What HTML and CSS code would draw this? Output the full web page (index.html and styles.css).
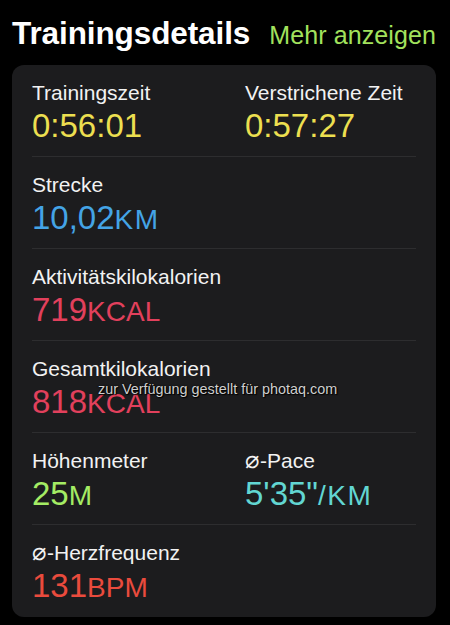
FILE: index.html
```html
<!DOCTYPE html>
<html lang="de">
<head>
<meta charset="utf-8">
<title>Trainingsdetails</title>
<link rel="stylesheet" href="styles.css">
</head>
<body>
<header class="header">
  <h1 class="title">Trainingsdetails</h1>
  <a class="more">Mehr anzeigen</a>
</header>
<section class="card">
  <div class="row two">
    <div class="metric">
      <div class="label">Trainingszeit</div>
      <div class="value yellow">0:56:01</div>
    </div>
    <div class="metric">
      <div class="label">Verstrichene Zeit</div>
      <div class="value yellow">0:57:27</div>
    </div>
  </div>
  <div class="row">
    <div class="metric">
      <div class="label">Strecke</div>
      <div class="value blue">10,02<span class="unit km">km</span></div>
    </div>
  </div>
  <div class="row">
    <div class="metric">
      <div class="label">Aktivitätskilokalorien</div>
      <div class="value pink">719<span class="unit">kcal</span></div>
    </div>
  </div>
  <div class="row">
    <div class="metric">
      <div class="label">Gesamtkilokalorien</div>
      <div class="value pink">818<span class="unit">kcal</span></div>
    </div>
  </div>
  <div class="row two">
    <div class="metric">
      <div class="label">Höhenmeter</div>
      <div class="value green">25<span class="unit">m</span></div>
    </div>
    <div class="metric">
      <div class="label"><span class="diam">⌀</span>-Pace</div>
      <div class="value cyan">5'35"<span class="unit km">/km</span></div>
    </div>
  </div>
  <div class="row">
    <div class="metric">
      <div class="label"><span class="diam">⌀</span>-Herzfrequenz</div>
      <div class="value red">131<span class="unit">bpm</span></div>
    </div>
  </div>
</section>
<div class="watermark">zur Verfügung gestellt für photaq.com</div>
</body>
</html>
```
FILE: styles.css
```css
html, body {
  margin: 0;
  padding: 0;
  background: #000;
}
body {
  width: 450px;
  height: 625px;
  overflow: hidden;
  position: relative;
  font-family: "Liberation Sans", Arial, sans-serif;
  color: #f4f4f4;
}
.header {
  display: flex;
  justify-content: space-between;
  align-items: baseline;
  height: 65px;
  box-sizing: border-box;
  padding: 16px 14px 0 12px;
}
.title {
  margin: 0;
  font-size: 31.5px;
  line-height: 34px;
  font-weight: 700;
  color: #fff;
  letter-spacing: -0.1px;
}
.more {
  font-size: 25px;
  line-height: 34px;
  color: #a2e25d;
  letter-spacing: 0.1px;
}
.card {
  margin: 0 14px 0 12px;
  background: #1c1c1e;
  border-radius: 12px;
  padding: 0 20px;
}
.row {
  display: grid;
  grid-template-columns: 1fr;
  padding: 15px 0 12px;
  border-bottom: 1px solid #2d2d2f;
}
.row:last-child {
  border-bottom: none;
  padding-bottom: 13px;
}
.row.two {
  grid-template-columns: 213px 1fr;
}
.metric {
  display: flex;
  flex-direction: column;
  gap: 3px;
}
.label {
  font-size: 21px;
  line-height: 25px;
  height: 25px;
  color: #f2f2f2;
}
.diam {
  font-family: "DejaVu Sans", sans-serif;
  font-size: 24px;
  font-weight: 300;
  line-height: 0;
  display: inline-block;
  margin-right: 1px;
}
.value {
  font-size: 33px;
  line-height: 36px;
  height: 36px;
  white-space: nowrap;
}
.unit {
  font-size: 28px;
  line-height: 20px;
  text-transform: uppercase;
}
.unit.km {
  letter-spacing: 1.5px;
}
.yellow { color: #ecdf50; }
.blue { color: #44a4e6; }
.pink { color: #e2405c; }
.green { color: #a4ec64; }
.cyan { color: #62d6d2; }
.red { color: #ea4b3d; }
.watermark {
  position: absolute;
  left: 98px;
  top: 380px;
  font-size: 14.4px;
  line-height: 18px;
  color: #cfcfcf;
  text-shadow: 0 0 2px #000, 1px 1px 1px #000;
}
```
